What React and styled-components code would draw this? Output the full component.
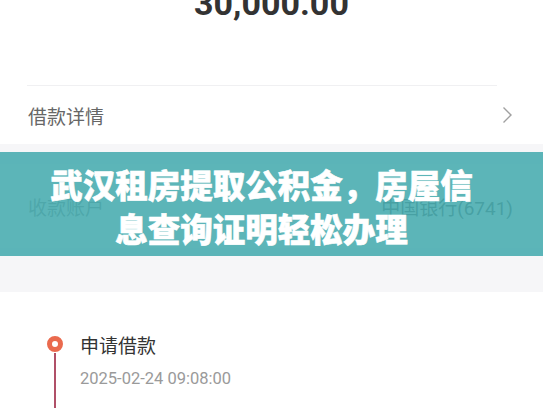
import React from 'react';
import styled, { createGlobalStyle } from 'styled-components';

const GlobalStyle = createGlobalStyle`
	body {
		margin: 0;
		background: #ffffff;
		font-family: Roboto, "Noto Sans CJK SC", sans-serif;
		overflow: hidden;
	}
`;

const Page = styled.div`
	position: relative;
	width: 543px;
	height: 408px;
	overflow: hidden;
	background: #f6f6f8;
`;

const Card = styled.div`
	background: #ffffff;
	padding: ${(p) => p.pad || '0'};
`;

const Amount = styled.div`
	margin-top: -17px;
	font-size: 34px;
	line-height: 40px;
	font-weight: 700;
	color: #333333;
	text-align: center;
`;

const Divider = styled.div`
	height: 1px;
	background: #f0f0f2;
	margin: 62px 46px 0 27px;
`;

const Row = styled.div`
	display: flex;
	align-items: center;
	justify-content: space-between;
	height: ${(p) => p.h || 58}px;
	padding: 0 30px 0 28px;
	font-family: "Noto Sans CJK SC", Roboto, sans-serif;
	font-size: 19px;
`;

const Label = styled.span`
	color: ${(p) => p.color || '#666666'};
`;

const Value = styled.span`
	color: #555555;
	font-family: Roboto, "Noto Sans CJK SC", sans-serif;
`;

const Gap = styled.div`
	height: ${(p) => p.h}px;
`;

const Timeline = styled(Card)`
	padding: 40px 0 0 47px;
	height: 200px;
`;

const Step = styled.div`
	display: grid;
	grid-template-columns: 16px 1fr;
	column-gap: 17px;
`;

const Rail = styled.div`
	display: flex;
	flex-direction: column;
	align-items: center;
	padding-top: 4px;
`;

const Dot = styled.div`
	width: 16px;
	height: 16px;
	box-sizing: border-box;
	border-radius: 50%;
	border: 5px solid #ea6a4e;
	background: #ffffff;
`;

const Line = styled.div`
	width: 2px;
	height: 80px;
	margin-top: 1px;
	background: #b05068;
`;

const StepTitle = styled.div`
	font-family: "Noto Sans CJK SC", sans-serif;
	font-size: 19px;
	line-height: 26px;
	color: #333333;
`;

const StepTime = styled.div`
	margin-top: 10px;
	font-size: 16.5px;
	line-height: 22px;
	color: #9a9a9a;
`;

const Banner = styled.div`
	position: absolute;
	top: 152px;
	left: 0;
	right: 0;
	height: 104px;
	box-sizing: border-box;
	padding: 4px 60px 0 40px;
	display: flex;
	align-items: center;
	justify-content: center;
	background: rgba(69, 171, 174, 0.88);
`;

const BannerTitle = styled.h1`
	margin: 0;
	font-family: "Noto Sans CJK SC", sans-serif;
	font-weight: 900;
	font-size: 32.5px;
	line-height: 44px;
	color: #ffffff;
	-webkit-text-stroke: 0.6px #ffffff;
	text-align: center;
`;

const Chevron = () => (
	<svg width="11" height="18" viewBox="0 0 11 18">
		<polyline points="1.5,1.5 9,9 1.5,16.5" fill="none" stroke="#a0a0a0" strokeWidth="1.4" />
	</svg>
);

export default function App() {
	return (
		<Page>
			<GlobalStyle />
			<Card>
				<Amount>30,000.00</Amount>
				<Divider />
				<Row>
					<Label>借款详情</Label>
					<Chevron />
				</Row>
			</Card>
			<Gap h={20} />
			<Card pad="13px 0">
				<Row>
					<Label color="#8a8a8a">收款账户</Label>
					<Value>中国银行(6741)</Value>
				</Row>
			</Card>
			<Gap h={44} />
			<Timeline>
				<Step>
					<Rail>
						<Dot />
						<Line />
					</Rail>
					<div>
						<StepTitle>申请借款</StepTitle>
						<StepTime>2025-02-24 09:08:00</StepTime>
					</div>
				</Step>
			</Timeline>
			<Banner>
				<BannerTitle>武汉租房提取公积金，房屋信息查询证明轻松办理</BannerTitle>
			</Banner>
		</Page>
	);
}
